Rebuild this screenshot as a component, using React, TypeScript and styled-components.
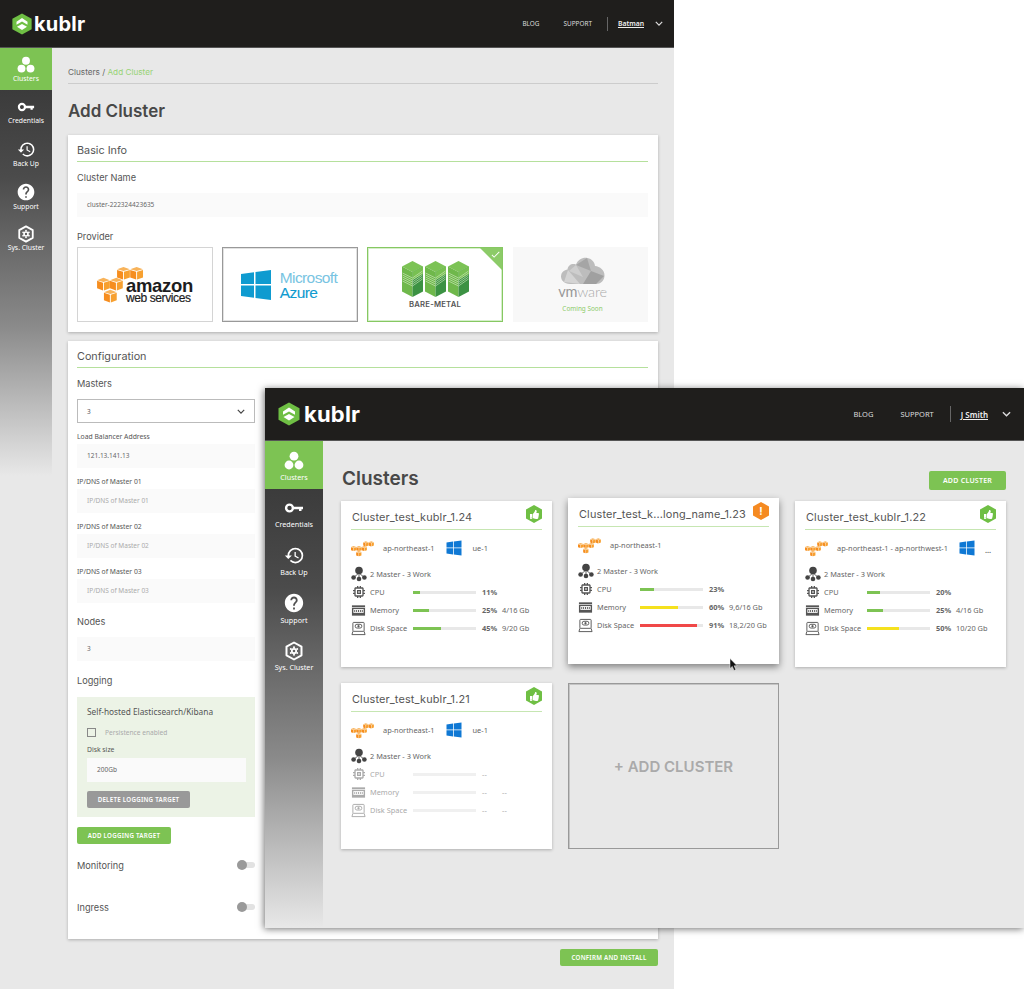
import React from "react";
import styled, { createGlobalStyle } from "styled-components";
import { MdHistory, MdHelp, MdMemory, MdCheck } from "react-icons/md";
import { FaThumbsUp } from "react-icons/fa";

const GREEN = "#7dc353";
const TITLE_FONT = `Inter, "Liberation Sans", sans-serif`;
const TEXT_FONT = `"Noto Sans", "Liberation Sans", sans-serif`;

const GlobalStyle = createGlobalStyle`
  html, body {
    margin: 0;
    background: #fff;
  }
  * {
    box-sizing: border-box;
  }
`;

const Desktop = styled.div`
  position: relative;
  width: 1024px;
  height: 989px;
  overflow: hidden;
  background: #fff;
  font-family: ${TEXT_FONT};
  color: #555;
`;

const BackWindow = styled.div`
  width: 674px;
  height: 989px;
  background: #e8e8e8;
`;

const FrontWindow = styled.div`
  position: absolute;
  left: 265px;
  top: 388px;
  width: 759px;
  height: 540px;
  background: #e8e8e8;
  box-shadow: -1px 1px 7px rgba(0, 0, 0, 0.55);
`;

const HeaderBar = styled.div<{ $big?: boolean }>`
  height: ${(p) => (p.$big ? 53 : 48)}px;
  background: #1f1e1c;
  border-bottom: 1px solid #555;
  display: flex;
  align-items: center;
  justify-content: space-between;
  padding: ${(p) => (p.$big ? "0 13px 0 12px" : "0 11px 0 11px")};
  color: #fff;
`;

const Brand = styled.div<{ $big?: boolean }>`
  display: flex;
  align-items: center;
  gap: ${(p) => (p.$big ? 3 : 1)}px;
  font-family: ${TITLE_FONT};
  font-weight: 700;
  font-size: ${(p) => (p.$big ? 22 : 20)}px;
  letter-spacing: 0.2px;
`;

const HeaderNav = styled.div<{ $big?: boolean }>`
  display: flex;
  align-items: center;
  font-size: ${(p) => (p.$big ? 7.5 : 6.4)}px;
  color: #ddd;
  gap: ${(p) => (p.$big ? 27 : 24)}px;
`;

const UserBox = styled.div<{ $big?: boolean }>`
  display: flex;
  align-items: center;
  height: ${(p) => (p.$big ? 16 : 14)}px;
  border-left: 1px solid #666;
  margin-left: ${(p) => (p.$big ? -11 : -9)}px;
  padding-left: 10px;
  gap: ${(p) => (p.$big ? 14 : 11)}px;
  font-weight: 600;
  font-size: ${(p) => (p.$big ? 8 : 6.8)}px;
  u {
    color: #eee;
  }
`;

const Split = styled.div`
  display: flex;
  align-items: flex-start;
`;

const SideBar = styled.div<{ $big?: boolean }>`
  flex: none;
  width: ${(p) => (p.$big ? 58 : 52)}px;
  height: ${(p) => (p.$big ? 487 : 428)}px;
  background: linear-gradient(#3a3a3a 8%, #4b4b4b 30%, #8a8a8a 65%, #e8e8e8 100%);
`;

const NavItem = styled.div<{ $big?: boolean; $active?: boolean }>`
  height: ${(p) => (p.$big ? 47.5 : 42.2)}px;
  padding-top: ${(p) => (p.$big ? 3 : 1)}px;
  display: flex;
  flex-direction: column;
  align-items: center;
  justify-content: center;
  gap: ${(p) => (p.$big ? 2 : 1)}px;
  color: #fff;
  background: ${(p) => (p.$active ? GREEN : "transparent")};
  font-size: ${(p) => (p.$big ? 7.2 : 6.8)}px;
  line-height: 1.2;
  svg {
    display: block;
  }
`;

const BackMain = styled.div`
  flex: 1;
  padding: 0 16px;
`;

const Breadcrumb = styled.div`
  height: 36px;
  padding-top: 17px;
  border-bottom: 1px solid #ccc;
  font-family: ${TITLE_FONT};
  font-size: 8.2px;
  line-height: 14px;
  color: #666;
  span {
    color: #97d375;
  }
`;

const PageTitle = styled.h1<{ $big?: boolean }>`
  margin: ${(p) => (p.$big ? "-3px 0 0 1px" : "17px 0 14px")};
  height: 20px;
  line-height: 20px;
  font-family: ${TITLE_FONT};
  font-weight: 600;
  font-size: ${(p) => (p.$big ? 19 : 17)}px;
  color: #484848;
`;

const FormCard = styled.section<{ $height?: number }>`
  background: #fff;
  box-shadow: 0 1px 3px rgba(0, 0, 0, 0.25);
  padding: 0 10px 10px 9px;
  margin-bottom: 9px;
  height: ${(p) => (p.$height ? `${p.$height}px` : "auto")};
`;

const SectionHead = styled.div`
  height: 27px;
  line-height: 31px;
  border-bottom: 1px solid #b5e09c;
  font-family: ${TITLE_FONT};
  font-size: 10.8px;
  color: #555;
`;

const FieldLabel = styled.div<{ $top?: number; $bottom?: number }>`
  height: 14px;
  line-height: 14px;
  margin-top: ${(p) => p.$top ?? 9}px;
  margin-bottom: ${(p) => p.$bottom ?? 8}px;
  font-family: ${TITLE_FONT};
  font-size: 9.2px;
  color: #555;
`;

const SmallLabel = styled.div`
  height: 10px;
  line-height: 10px;
  margin: 9px 0 2px;
  font-size: 6.8px;
  color: #555;
`;

const Column = styled.div`
  width: 178px;
`;

const TextInput = styled.div<{ $placeholder?: boolean }>`
  height: 24px;
  padding-left: 10px;
  line-height: 24px;
  background: #fafafa;
  font-size: 6.5px;
  color: ${(p) => (p.$placeholder ? "#aaa" : "#666")};
`;

const SelectBox = styled.div`
  height: 24px;
  padding: 0 9px 0 9px;
  display: flex;
  align-items: center;
  justify-content: space-between;
  border: 1px solid #bbb;
  background: #fff;
  font-size: 6.5px;
  color: #555;
`;

const ProviderRow = styled.div`
  display: grid;
  grid-template-columns: 136px 136px 136px 136px;
  gap: 9px;
`;

const ProviderTile = styled.div<{ $tone?: "plain" | "grey" | "selected" | "off" }>`
  position: relative;
  height: 75px;
  display: flex;
  flex-direction: column;
  align-items: center;
  justify-content: center;
  margin-left: ${(p) => (p.$tone === "off" ? 1 : 0)}px;
  padding-left: ${(p) => (p.$tone === "off" ? 4 : 0)}px;
  background: ${(p) => (p.$tone === "off" ? "#f8f8f8" : "#fff")};
  border: ${(p) =>
    p.$tone === "selected"
      ? "1px solid #86c862"
      : p.$tone === "grey"
      ? "1px solid #999"
      : p.$tone === "off"
      ? "1px solid #f8f8f8"
      : "1px solid #d4d4d4"};
  box-shadow: ${(p) =>
    p.$tone === "selected"
      ? "inset 0 0 0 1px #d6eecb"
      : p.$tone === "grey"
      ? "inset 0 0 0 1px #e2e2e2"
      : "none"};
`;

const TickCorner = styled.div`
  position: absolute;
  top: 0;
  right: 0;
  width: 22px;
  height: 22px;
  background: #8ccb68;
  clip-path: polygon(0 0, 100% 0, 100% 100%);
  color: #fff;
  svg {
    position: absolute;
    top: 1px;
    right: 1px;
  }
`;

const AwsLogo = styled.div`
  display: flex;
  align-items: flex-start;
  height: 36px;
`;

const AwsWords = styled.div`
  font-family: "Liberation Sans", sans-serif;
  color: #1d1d1d;
  margin-top: 11px;
  margin-left: -18px;
  b {
    display: block;
    font-size: 18.5px;
    letter-spacing: -0.3px;
    line-height: 15px;
  }
  span {
    display: block;
    font-size: 12px;
    line-height: 11px;
    letter-spacing: -0.4px;
    font-weight: 400;
    -webkit-text-stroke: 0.2px #1d1d1d;
  }
`;

const AzureLogo = styled.div`
  display: flex;
  align-items: center;
  gap: 8px;
  margin-left: -3px;
`;

const AzureWords = styled.div`
  font-family: "Liberation Sans", sans-serif;
  color: #78c4e2;
  font-size: 15.5px;
  line-height: 15px;
  letter-spacing: -0.6px;
  b {
    display: block;
    font-weight: 400;
    color: #0f9bd0;
    -webkit-text-stroke: 0.1px #0f9bd0;
  }
`;

const MetalCaption = styled.div`
  margin-top: 3px;
  font-family: ${TITLE_FONT};
  font-weight: 600;
  font-size: 7.7px;
  letter-spacing: 0.2px;
  color: #555;
`;

const VmWord = styled.div`
  font-family: Lato, "Liberation Sans", sans-serif;
  font-weight: 300;
  font-size: 14.5px;
  line-height: 11px;
  margin-top: 2px;
  letter-spacing: -0.2px;
  color: #aaa;
  b {
    font-weight: 400;
    color: #999;
  }
`;

const ComingSoon = styled.div`
  margin-top: 7px;
  font-size: 6.4px;
  color: #8ccb68;
`;

const LoggingPanel = styled.div`
  width: 178px;
  height: 120px;
  padding: 9px 9px 0 10px;
  background: #ecf3e6;
`;

const PanelTitle = styled.div`
  font-size: 8.3px;
  line-height: 12px;
  color: #555;
`;

const CheckRow = styled.div`
  display: flex;
  align-items: center;
  gap: 9px;
  margin-top: 8px;
  height: 12px;
  font-size: 6.6px;
  color: #aaa;
`;

const CheckBox = styled.span`
  width: 9px;
  height: 9px;
  border: 1px solid #888;
`;

const PanelLabel = styled.div`
  margin-top: 7px;
  margin-bottom: 3px;
  font-size: 6.8px;
  line-height: 10px;
  color: #555;
`;

const ActionButton = styled.div<{ $tone?: "green" | "grey"; $width: number; $height?: number; $size?: number }>`
  width: ${(p) => p.$width}px;
  height: ${(p) => p.$height ?? 17}px;
  display: flex;
  align-items: center;
  justify-content: center;
  border-radius: 2px;
  background: ${(p) => (p.$tone === "grey" ? "#999" : GREEN)};
  color: #fff;
  font-weight: 600;
  font-size: ${(p) => p.$size ?? 6.2}px;
  letter-spacing: 0.25px;
`;

const DeleteWrap = styled.div`
  margin-top: 9px;
`;

const AddLogWrap = styled.div`
  margin-top: 10px;
`;

const ToggleRow = styled.div<{ $top: number }>`
  width: 178px;
  height: 14px;
  margin-top: ${(p) => p.$top}px;
  display: flex;
  align-items: center;
  justify-content: space-between;
  font-family: ${TITLE_FONT};
  font-size: 9.2px;
  color: #555;
`;

const Toggle = styled.span`
  position: relative;
  width: 18px;
  height: 6px;
  border-radius: 3px;
  background: #e2e2e2;
  &::before {
    content: "";
    position: absolute;
    left: 0;
    top: -2px;
    width: 10px;
    height: 10px;
    border-radius: 50%;
    background: #999;
  }
`;

const ConfirmRow = styled.div`
  display: flex;
  justify-content: flex-end;
  margin-top: 10px;
`;

const FrontMain = styled.div`
  flex: 1;
  padding: 0 18px;
`;

const TitleRow = styled.div`
  display: flex;
  align-items: center;
  justify-content: space-between;
  padding-top: 30px;
  margin-bottom: 11px;
  height: 49px;
`;

const ClusterGrid = styled.div`
  display: grid;
  grid-template-columns: repeat(3, 211px);
  grid-auto-rows: 166px;
  gap: 16px;
`;

const ClusterCard = styled.div<{ $raised?: boolean }>`
  background: #fff;
  padding: 0 10px;
  box-shadow: ${(p) =>
    p.$raised ? "0 3px 7px rgba(0, 0, 0, 0.45)" : "0 1px 3px rgba(0, 0, 0, 0.25)"};
  transform: ${(p) => (p.$raised ? "translateY(-3px)" : "none")};
`;

const AddTile = styled.div`
  display: flex;
  align-items: center;
  justify-content: center;
  border: 1px solid #999;
  box-shadow: inset 1px 1px 0 #c4c4c4;
  font-family: ${TITLE_FONT};
  font-weight: 600;
  font-size: 15px;
  color: #aaa;
`;

const CardHead = styled.div`
  height: 29px;
  display: flex;
  align-items: center;
  justify-content: space-between;
  padding: 3px 0 0 1px;
  border-bottom: 1px solid #c6e6b2;
  font-family: ${TITLE_FONT};
  font-size: 10.9px;
  letter-spacing: 0.15px;
  color: #555;
`;

const HexBadge = styled.div<{ $color: string }>`
  width: 16px;
  height: 18px;
  margin-top: -5px;
  display: flex;
  align-items: center;
  justify-content: center;
  background: ${(p) => p.$color};
  color: #fff;
  font-size: 10px;
  font-weight: 700;
  clip-path: polygon(50% 0, 100% 25%, 100% 75%, 50% 100%, 0 75%, 0 25%);
`;

const ProviderLine = styled.div`
  height: 35px;
  padding-top: 1px;
  display: flex;
  align-items: center;
  font-size: 7.4px;
  white-space: nowrap;
  color: #666;
`;

const AwsSlot = styled.div`
  width: 32px;
  padding-top: 1px;
  svg {
    display: block;
  }
`;

const RegionName = styled.span`
  margin-right: 11px;
`;

const ZoneName = styled.span`
  margin-left: 11px;
`;

const MoreDots = styled.span`
  margin-left: 10px;
  font-weight: 700;
  margin-top: 3px;
`;

const StatRow = styled.div<{ $muted?: boolean }>`
  height: 18px;
  display: grid;
  grid-template-columns: 19px 43px 63px 26px 1fr;
  align-items: center;
  font-size: 7.4px;
  white-space: nowrap;
  color: ${(p) => (p.$muted ? "#aaa" : "#666")};
  svg {
    display: block;
    color: ${(p) => (p.$muted ? "#aaa" : "#555")};
  }
`;

const StatPct = styled.b<{ $muted?: boolean }>`
  padding-left: 6px;
  font-weight: ${(p) => (p.$muted ? 400 : 700)};
  font-size: 7.4px;
`;

const BarTrack = styled.div<{ $muted?: boolean }>`
  height: 3px;
  background: ${(p) => (p.$muted ? "#f0f0f0" : "#e8e8e8")};
`;

const BarFill = styled.div<{ $color: string }>`
  height: 100%;
  background: ${(p) => p.$color};
`;

const NodesRow = styled.div`
  height: 18px;
  display: flex;
  align-items: center;
  gap: 3px;
  font-size: 7.4px;
  color: #666;
  svg {
    display: block;
  }
`;

const CursorMark = styled.svg`
  position: absolute;
  left: 729px;
  top: 658px;
`;

const HexLogo = ({ size }: { size: number }) => (
  <svg width={size} height={size} viewBox="0 0 24 24">
    <polygon points="12,0.5 22.5,6.3 22.5,17.7 12,23.5 1.5,17.7 1.5,6.3" fill="#6fbf44" />
    <polygon points="12,5.5 18,9.5 18,12.8 12,9.4 6,12.8 6,9.5" fill="#fff" />
    <polygon points="12,12 17.5,15 12,18.5 6.5,15" fill="#fff" />
  </svg>
);

const ClustersIcon = ({ size }: { size: number }) => (
  <svg width={size} height={size} viewBox="0 0 20 20" fill="#fff">
    <circle cx="10" cy="5.2" r="4.4" />
    <circle cx="5" cy="14" r="4.4" />
    <circle cx="15" cy="14" r="4.4" />
  </svg>
);

const KeyIcon = ({ size }: { size: number }) => (
  <svg width={size} height={size} viewBox="0 0 20 20" fill="none">
    <circle cx="5.5" cy="10" r="3.4" stroke="#fff" strokeWidth="2.4" />
    <path d="M9 8.7H19V11.3H17.5V13H15V11.3H9Z" fill="#fff" />
  </svg>
);

const SysIcon = ({ size }: { size: number }) => (
  <svg width={size} height={size} viewBox="0 0 20 20" fill="none">
    <polygon points="10,1.5 17.5,5.7 17.5,14.3 10,18.5 2.5,14.3 2.5,5.7" stroke="#fff" strokeWidth="2" strokeLinejoin="round" />
    <circle cx="10" cy="10" r="2.2" stroke="#fff" strokeWidth="1.8" />
    <circle cx="10" cy="6.3" r="1" fill="#fff" />
    <circle cx="10" cy="13.7" r="1" fill="#fff" />
    <circle cx="6.8" cy="8.1" r="1" fill="#fff" />
    <circle cx="13.2" cy="8.1" r="1" fill="#fff" />
    <circle cx="6.8" cy="11.9" r="1" fill="#fff" />
    <circle cx="13.2" cy="11.9" r="1" fill="#fff" />
  </svg>
);

const Cube = ({ x, y }: { x: number; y: number }) => (
  <g transform={`translate(${x} ${y})`}>
    <polygon points="0,2 5.6,0 11.2,2 5.6,3.6" fill="#f8b35a" />
    <polygon points="0,2.6 5.2,4.2 5.2,11 0,9.2" fill="#f68d1e" />
    <polygon points="6,4.2 11.2,2.6 11.2,9.2 6,11" fill="#f7a030" />
  </g>
);

const AwsMark = () => (
  <svg width="47" height="36" viewBox="0 0 41 31.5">
    <Cube x={17.500} y={0} />
    <Cube x={29} y={0} />
    <Cube x={0} y={9.500} />
    <Cube x={11.300} y={9.500} />
    <Cube x={6} y={20} />
  </svg>
);

const AwsSmall = () => (
  <svg width="23" height="16" viewBox="0 0 49 33">
    <Cube x={26} y={0} />
    <Cube x={37.500} y={0} />
    <Cube x={0} y={10} />
    <Cube x={11.300} y={10} />
    <Cube x={22.600} y={10} />
    <Cube x={11} y={21} />
  </svg>
);

const WindowsMark = ({ size, color }: { size: number; color: string }) => (
  <svg width={size} height={size} viewBox="0 0 32 32" fill={color}>
    <polygon points="1,5 14,3.2 14,15 1,15" />
    <polygon points="15.5,3 31,1 31,15 15.5,15" />
    <polygon points="1,16.5 14,16.5 14,28.8 1,27" />
    <polygon points="15.5,16.5 31,16.5 31,31 15.5,29" />
  </svg>
);

const Tower = ({ x }: { x: number }) => (
  <g transform={`translate(${x} 0)`}>
    <polygon points="10.5,0 21,5.5 10.5,11 0,5.5" fill="#7cc355" />
    <polygon points="0,5.5 10.5,11 10.5,36 0,30.5" fill="#6fb84b" />
    <polygon points="10.5,11 21,5.5 21,30.5 10.5,36" fill="#3c9243" />
    <polygon points="10.5,11 21,5.5 21,13 10.5,19" fill="#78c052" />
    {[13, 15, 17, 19, 21].map((y) => (
      <path key={y} d={`M0.5 ${y - 1}L10.5 ${y + 4}L20.5 ${y - 3}`} stroke="#d5ecc6" strokeWidth="0.6" fill="none" />
    ))}
  </g>
);

const MetalMark = () => (
  <svg width="67" height="36" viewBox="0 0 67 36">
    <Tower x={0} />
    <Tower x={23} />
    <Tower x={46} />
  </svg>
);

const VmCloud = () => (
  <svg width="44" height="27" viewBox="0 0 44 27">
    <path d="M9 27C3 27 0 23 0 19.5C0 15 3.5 13 6.500 12.500C7 8 11 6 15 7.500C17 2.500 22 0 26.500 1C31 2 33.500 5 34 9C39 9.500 43.500 13 43.500 18.500C43.500 23.500 39.500 27 35 27Z" fill="#bdbdbd" />
    <polygon points="15,8 26,1 30,14" fill="#a5a5a5" />
    <polygon points="7,13 19,27 3,25" fill="#d4d4d4" />
    <polygon points="30,14 43,19 35,27 22,27" fill="#a0a0a0" />
    <polygon points="15,8 22,20 8,14" fill="#cecece" />
  </svg>
);

const NodesIcon = () => (
  <svg width="16" height="16" viewBox="0 0 16 16" fill="#444">
    <circle cx="8" cy="4.500" r="3.800" />
    <circle cx="2.600" cy="11.500" r="2.300" />
    <circle cx="8" cy="13" r="2.300" />
    <circle cx="13.400" cy="11.500" r="2.300" />
    <path d="M8 6V13M8 7L2.600 11.500M8 7L13.400 11.500" stroke="#444" strokeWidth="0.800" />
  </svg>
);

const MemoryIcon = ({ size }: { size: number }) => (
  <svg width={size} height={size} viewBox="0 0 16 16" fill="currentColor">
    <path d="M1 2.500H15V13.500H1Z" />
    <rect x="2.500" y="6.500" width="11" height="4" fill="#fff" />
    <path d="M3.500 7.500h1v2h-1zM5.500 7.500h1v2h-1zM7.500 7.500h1v2h-1zM9.500 7.500h1v2h-1zM11.500 7.500h1v2h-1z" />
    <rect x="1" y="4.300" width="14" height="0.700" fill="#fff" />
  </svg>
);

const DiskIcon = ({ size }: { size: number }) => (
  <svg width={size} height={size} viewBox="0 0 16 16" fill="none" stroke="currentColor">
    <rect x="2" y="1.500" width="12" height="9.500" rx="0.800" />
    <rect x="4.500" y="3.500" width="7" height="4" rx="1.800" />
    <circle cx="8" cy="5.500" r="0.800" fill="currentColor" />
    <path d="M2 11L1 14.500H15L14 11" />
  </svg>
);

const AppHeader = ({ user, big }: { user: string; big?: boolean }) => (
  <HeaderBar $big={big}>
    <Brand $big={big}>
      <HexLogo size={big ? 24 : 22} />
      kublr
    </Brand>
    <HeaderNav $big={big}>
      <span>BLOG</span>
      <span>SUPPORT</span>
      <UserBox $big={big}>
        <u>{user}</u>
        <svg width={big ? 9 : 8} height={big ? 6 : 5} viewBox="0 0 10 6" fill="none" stroke="#ddd" strokeWidth="1.500">
          <path d="M1 1L5 5L9 1" />
        </svg>
      </UserBox>
    </HeaderNav>
  </HeaderBar>
);

const AppSideBar = ({ big }: { big?: boolean }) => {
  const s = big ? 20 : 18;
  return (
    <SideBar $big={big}>
      <NavItem $big={big} $active>
        <ClustersIcon size={s} />
        Clusters
      </NavItem>
      <NavItem $big={big}>
        <KeyIcon size={s} />
        Credentials
      </NavItem>
      <NavItem $big={big}>
        <MdHistory size={s + 1} />
        Back Up
      </NavItem>
      <NavItem $big={big}>
        <MdHelp size={s + 2} />
        Support
      </NavItem>
      <NavItem $big={big}>
        <SysIcon size={s} />
        Sys. Cluster
      </NavItem>
    </SideBar>
  );
};

type Stat = { label: string; pct: number; extra?: string; color?: string };
type Cluster = {
  name: string;
  status: "ok" | "warn";
  region: string;
  zone?: string;
  more?: boolean;
  raised?: boolean;
  muted?: boolean;
  stats: Stat[];
};

const YELLOW = "#f5e11e";
const RED = "#f04848";

const clusters: Cluster[] = [
  {
    name: "Cluster_test_kublr_1.24",
    status: "ok",
    region: "ap-northeast-1",
    zone: "ue-1",
    stats: [
      { label: "CPU", pct: 11 },
      { label: "Memory", pct: 25, extra: "4/16 Gb" },
      { label: "Disk Space", pct: 45, extra: "9/20 Gb" },
    ],
  },
  {
    name: "Cluster_test_k...long_name_1.23",
    status: "warn",
    region: "ap-northeast-1",
    raised: true,
    stats: [
      { label: "CPU", pct: 23 },
      { label: "Memory", pct: 60, extra: "9,6/16 Gb", color: YELLOW },
      { label: "Disk Space", pct: 91, extra: "18,2/20 Gb", color: RED },
    ],
  },
  {
    name: "Cluster_test_kublr_1.22",
    status: "ok",
    region: "ap-northeast-1 - ap-northwest-1",
    more: true,
    stats: [
      { label: "CPU", pct: 20 },
      { label: "Memory", pct: 25, extra: "4/16 Gb" },
      { label: "Disk Space", pct: 50, extra: "10/20 Gb", color: YELLOW },
    ],
  },
  {
    name: "Cluster_test_kublr_1.21",
    status: "ok",
    region: "ap-northeast-1",
    zone: "ue-1",
    muted: true,
    stats: [
      { label: "CPU", pct: 0 },
      { label: "Memory", pct: 0 },
      { label: "Disk Space", pct: 0 },
    ],
  },
];

const statIcon = (label: string) => {
  if (label === "CPU") return <MdMemory size={16} />;
  if (label === "Memory") return <MemoryIcon size={15} />;
  return <DiskIcon size={15} />;
};

const ClusterTile = ({ cluster }: { cluster: Cluster }) => (
  <ClusterCard $raised={cluster.raised}>
    <CardHead>
      {cluster.name}
      {cluster.status === "ok" ? (
        <HexBadge $color="#6fbf44">
          <FaThumbsUp size={9} />
        </HexBadge>
      ) : (
        <HexBadge $color="#f58a21">!</HexBadge>
      )}
    </CardHead>
    <ProviderLine>
      <AwsSlot>
        <AwsSmall />
      </AwsSlot>
      <RegionName>{cluster.region}</RegionName>
      {(cluster.zone || cluster.more) && <WindowsMark size={16} color="#0f78d4" />}
      {cluster.zone && <ZoneName>{cluster.zone}</ZoneName>}
      {cluster.more && <MoreDots>...</MoreDots>}
    </ProviderLine>
    <NodesRow>
      <NodesIcon />2 Master - 3 Work
    </NodesRow>
    {cluster.stats.map((s) => (
      <StatRow key={s.label} $muted={cluster.muted}>
        {statIcon(s.label)}
        <span>{s.label}</span>
        <BarTrack $muted={cluster.muted}>
          <BarFill $color={s.color ?? GREEN} style={{ width: `${s.pct}%` }} />
        </BarTrack>
        <StatPct $muted={cluster.muted}>{cluster.muted ? "--" : `${s.pct}%`}</StatPct>
        <span>{cluster.muted ? (s.label === "CPU" ? "" : "--") : s.extra}</span>
      </StatRow>
    ))}
  </ClusterCard>
);

export default function App() {
  return (
    <Desktop>
      <GlobalStyle />
      <BackWindow>
        <AppHeader user="Batman" />
        <Split>
          <AppSideBar />
          <BackMain>
            <Breadcrumb>
              Clusters / <span>Add Cluster</span>
            </Breadcrumb>
            <PageTitle>Add Cluster</PageTitle>
            <FormCard>
              <SectionHead>Basic Info</SectionHead>
              <FieldLabel>Cluster Name</FieldLabel>
              <TextInput>cluster-222324423635</TextInput>
              <FieldLabel $top={13} $bottom={3}>
                Provider
              </FieldLabel>
              <ProviderRow>
                <ProviderTile>
                  <AwsLogo>
                    <AwsMark />
                    <AwsWords>
                      <b>amazon</b>
                      <span>web services</span>
                    </AwsWords>
                  </AwsLogo>
                </ProviderTile>
                <ProviderTile $tone="grey">
                  <AzureLogo>
                    <WindowsMark size={32} color="#0f9bd0" />
                    <AzureWords>
                      Microsoft
                      <b>Azure</b>
                    </AzureWords>
                  </AzureLogo>
                </ProviderTile>
                <ProviderTile $tone="selected">
                  <TickCorner>
                    <MdCheck size={11} />
                  </TickCorner>
                  <MetalMark />
                  <MetalCaption>BARE-METAL</MetalCaption>
                </ProviderTile>
                <ProviderTile $tone="off">
                  <VmCloud />
                  <VmWord>
                    <b>vm</b>ware
                  </VmWord>
                  <ComingSoon>Coming Soon</ComingSoon>
                </ProviderTile>
              </ProviderRow>
            </FormCard>
            <FormCard $height={598}>
              <SectionHead>Configuration</SectionHead>
              <Column>
                <FieldLabel>Masters</FieldLabel>
                <SelectBox>
                  3
                  <svg width="8" height="5" viewBox="0 0 10 6" fill="none" stroke="#444" strokeWidth="1.500">
                    <path d="M1 1L5 5L9 1" />
                  </svg>
                </SelectBox>
                <SmallLabel>Load Balancer Address</SmallLabel>
                <TextInput>121.13.141.13</TextInput>
                <SmallLabel>IP/DNS of Master 01</SmallLabel>
                <TextInput $placeholder>IP/DNS of Master 01</TextInput>
                <SmallLabel>IP/DNS of Master 02</SmallLabel>
                <TextInput $placeholder>IP/DNS of Master 02</TextInput>
                <SmallLabel>IP/DNS of Master 03</SmallLabel>
                <TextInput $placeholder>IP/DNS of Master 03</TextInput>
                <FieldLabel $top={12}>Nodes</FieldLabel>
                <TextInput>3</TextInput>
                <FieldLabel $top={13} $bottom={9}>
                  Logging
                </FieldLabel>
              </Column>
              <LoggingPanel>
                <PanelTitle>Self-hosted Elasticsearch/Kibana</PanelTitle>
                <CheckRow>
                  <CheckBox />
                  Persistence enabled
                </CheckRow>
                <PanelLabel>Disk size</PanelLabel>
                <TextInput>200Gb</TextInput>
                <DeleteWrap>
                  <ActionButton $tone="grey" $width={103}>
                    DELETE LOGGING TARGET
                  </ActionButton>
                </DeleteWrap>
              </LoggingPanel>
              <AddLogWrap>
                <ActionButton $width={94}>ADD LOGGING TARGET</ActionButton>
              </AddLogWrap>
              <ToggleRow $top={14}>
                Monitoring
                <Toggle />
              </ToggleRow>
              <ToggleRow $top={28}>
                Ingress
                <Toggle />
              </ToggleRow>
            </FormCard>
            <ConfirmRow>
              <ActionButton $width={98}>CONFIRM AND INSTALL</ActionButton>
            </ConfirmRow>
          </BackMain>
        </Split>
      </BackWindow>

      <FrontWindow>
        <AppHeader user="J Smith" big />
        <Split>
          <AppSideBar big />
          <FrontMain>
            <TitleRow>
              <PageTitle $big>Clusters</PageTitle>
              <ActionButton $width={77} $height={19} $size={7}>
                ADD CLUSTER
              </ActionButton>
            </TitleRow>
            <ClusterGrid>
              {clusters.map((c) => (
                <ClusterTile key={c.name} cluster={c} />
              ))}
              <AddTile>+ ADD CLUSTER</AddTile>
            </ClusterGrid>
          </FrontMain>
        </Split>
      </FrontWindow>

      <CursorMark width="9" height="13" viewBox="0 0 9 13">
        <path d="M1 0.500V10.500L3.300 8.400L5 12.500L6.800 11.700L5.200 7.800H8.200Z" fill="#111" stroke="#fff" strokeWidth="0.500" />
      </CursorMark>
    </Desktop>
  );
}
